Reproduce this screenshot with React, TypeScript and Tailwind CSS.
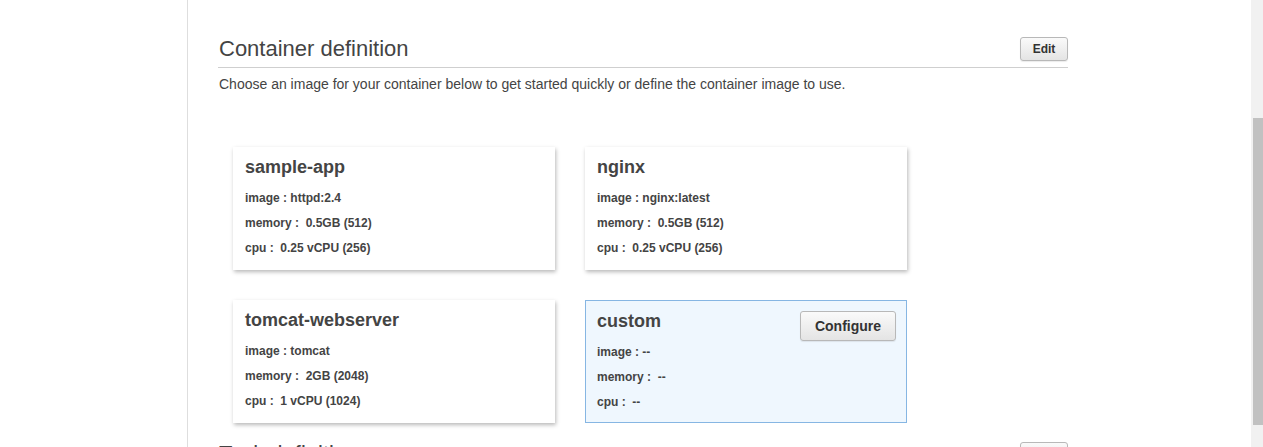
import React from "react";

type Container = {
  name: string;
  image: string;
  memory: string;
  cpu: string;
  custom?: boolean;
};

const containers: Container[] = [
  { name: "sample-app", image: "httpd:2.4", memory: "0.5GB (512)", cpu: "0.25 vCPU (256)" },
  { name: "nginx", image: "nginx:latest", memory: "0.5GB (512)", cpu: "0.25 vCPU (256)" },
  { name: "tomcat-webserver", image: "tomcat", memory: "2GB (2048)", cpu: "1 vCPU (1024)" },
  { name: "custom", image: "--", memory: "--", cpu: "--", custom: true },
];

function GrayButton({ label, className }: { label: string; className: string }) {
  return (
    <button
      className={`rounded-[3px] border border-[#b8b8b8] bg-gradient-to-b from-[#fafafa] to-[#e4e4e4] font-bold text-[#333] shadow-[0_1px_1px_rgba(0,0,0,0.08)] ${className}`}
    >
      {label}
    </button>
  );
}

function ContainerCard({ c }: { c: Container }) {
  return (
    <div
      className={
        c.custom
          ? "h-[123px] border border-[#86b6e3] bg-[#eff7fe] pl-[11px] pr-[10px] pt-[9px]"
          : "h-[123px] bg-white px-[12px] pt-[9px] shadow-[1px_2px_4px_rgba(0,0,0,0.28)]"
      }
    >
      {c.custom && (
        <GrayButton label="Configure" className="float-right mt-[1px] h-[30px] w-[96px] text-[14px]" />
      )}
      <h3 className="text-[18px] font-bold leading-[22px] text-[#444]">{c.name}</h3>
      <div className="mt-[8px] whitespace-pre text-[12px] font-bold leading-[25px] text-[#444]">
        <div>image : {c.image}</div>
        <div>memory :  {c.memory}</div>
        <div>cpu :  {c.cpu}</div>
      </div>
    </div>
  );
}

function SectionHeader({ title }: { title: string }) {
  return (
    <div className="flex items-end justify-between border-b border-[#cfcfcf] pb-[6px]">
      <h2 className="ml-[1px] text-[22px] leading-[24px] text-[#444]">{title}</h2>
      <GrayButton label="Edit" className="h-[24px] w-[48px] text-[12px]" />
    </div>
  );
}

export default function App() {
  return (
    <div className="flex h-[447px] w-full overflow-hidden bg-white font-['Liberation_Sans',Arial,sans-serif]">
      <div className="w-[187px] shrink-0" />

      <main className="w-[882px] shrink-0 border-l border-[#dedede] pl-[30px] pt-[37px]">
        <div className="w-[850px]">
          <SectionHeader title="Container definition" />
          <p className="ml-[1px] mt-[6px] text-[14px] leading-[20px] text-[#444]">
            Choose an image for your container below to get started quickly or define the container image to use.
          </p>

          <div className="ml-[15px] mt-[53px] grid w-[674px] grid-cols-2 gap-[30px]">
            {containers.map((c) => (
              <ContainerCard key={c.name} c={c} />
            ))}
          </div>

          <div className="mt-[19px]">
            <SectionHeader title="Task definition" />
          </div>
        </div>
      </main>

      <div className="flex-1" />

      {/* scrollbar */}
      <div className="w-[12px] shrink-0 bg-[#f1f1f1] pl-[2px] pt-[118px]">
        <div className="h-[307px] bg-[#c1c1c1]" />
      </div>
    </div>
  );
}
